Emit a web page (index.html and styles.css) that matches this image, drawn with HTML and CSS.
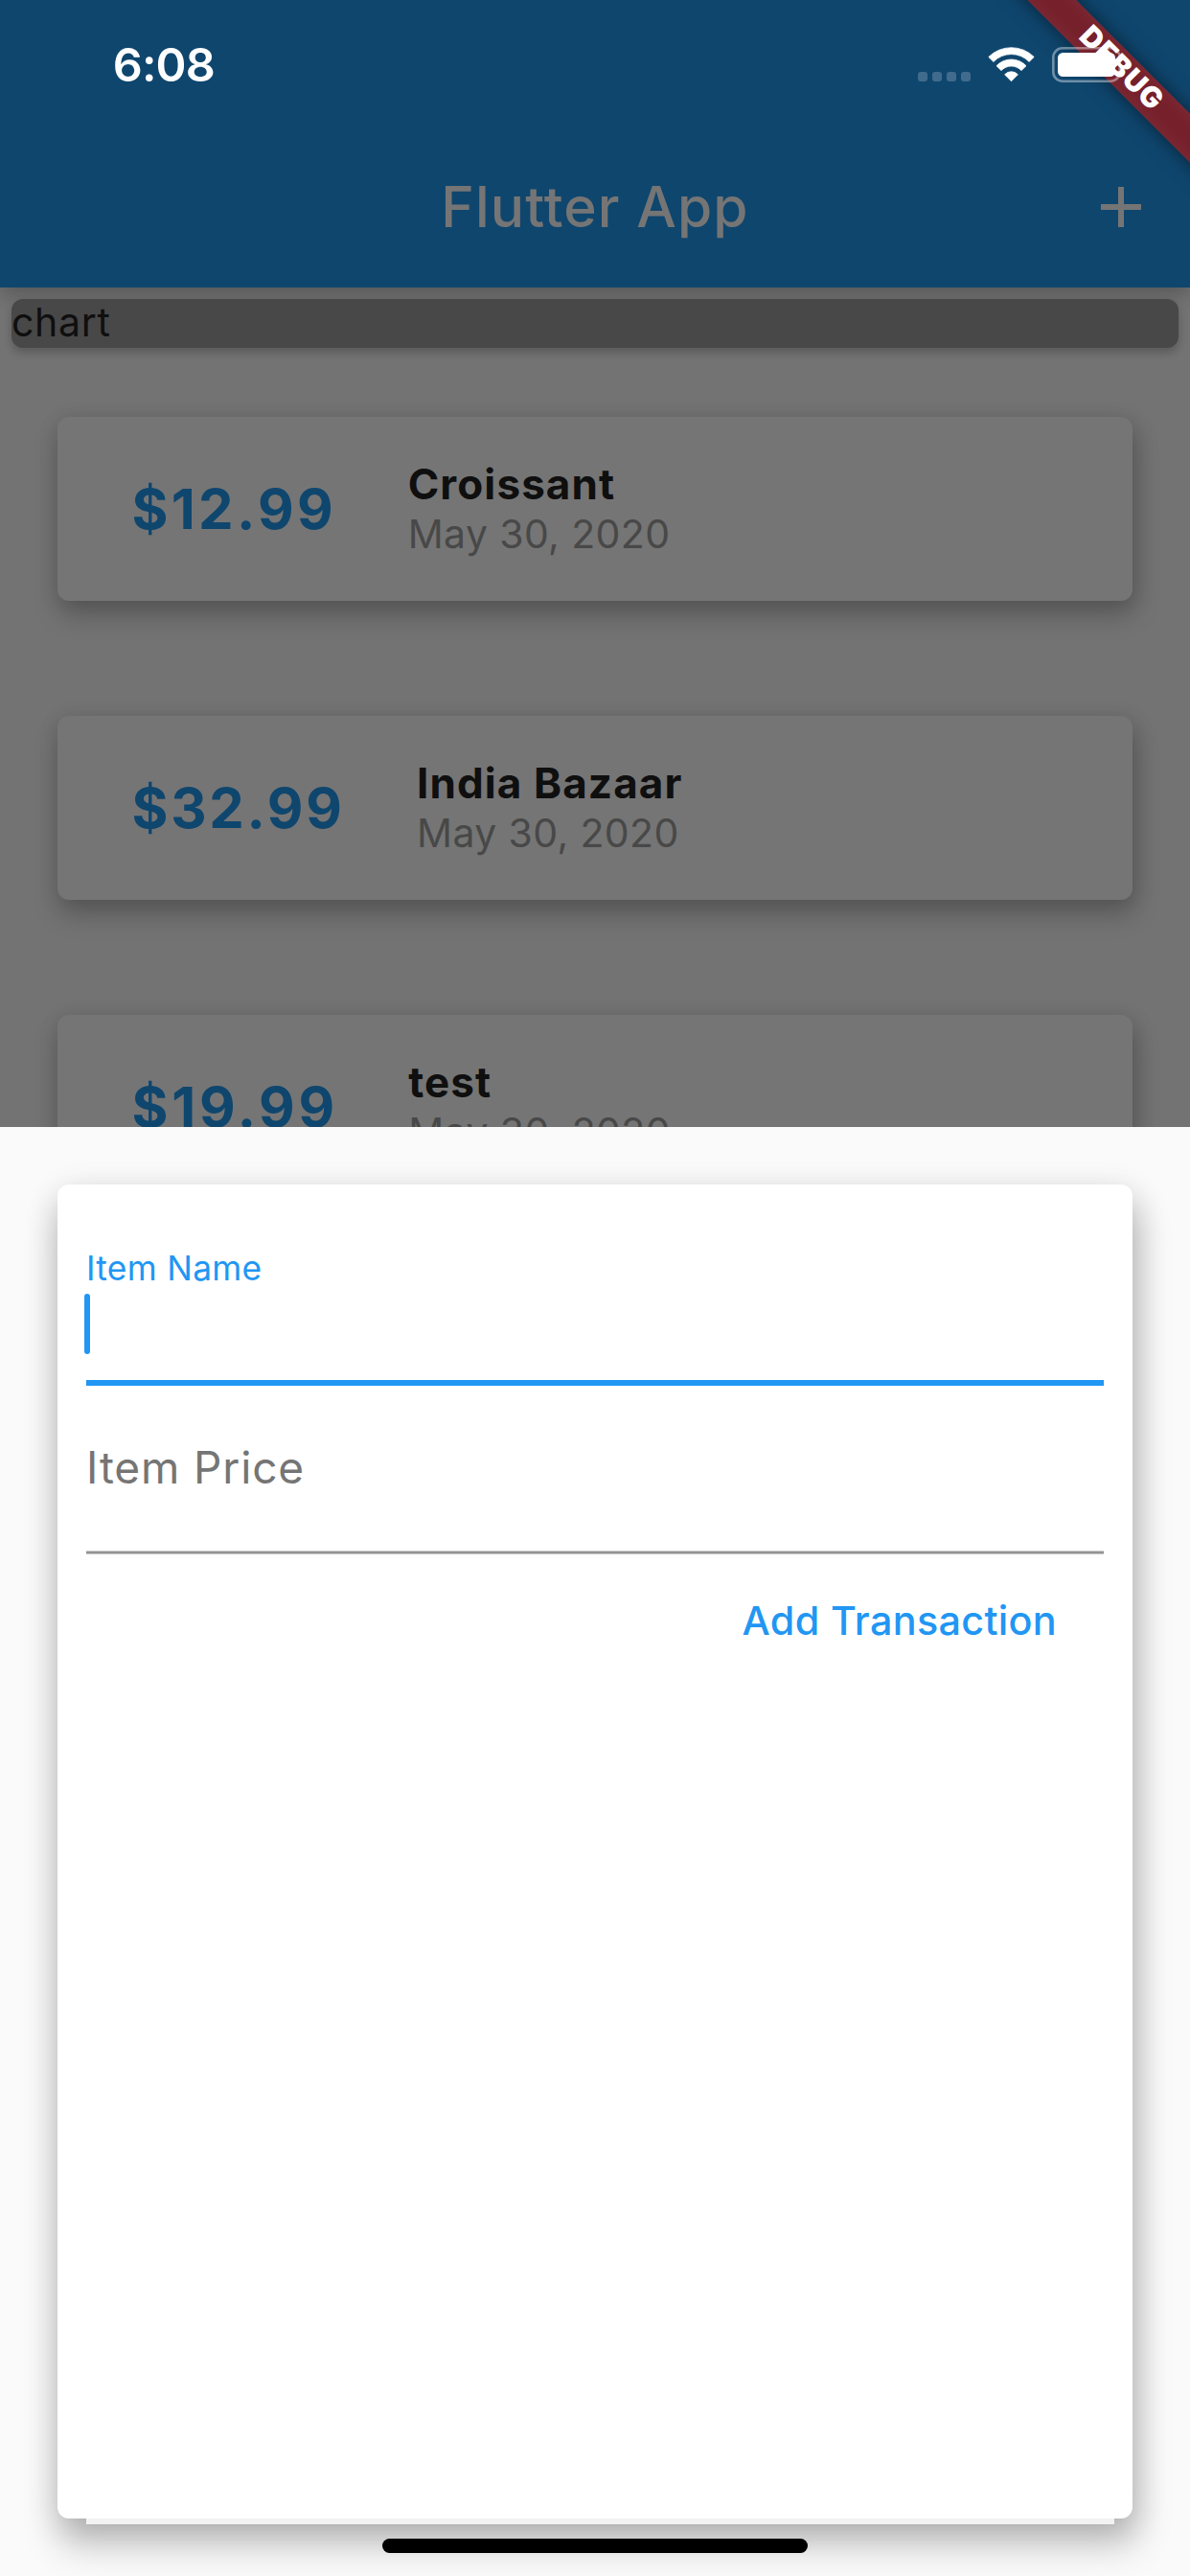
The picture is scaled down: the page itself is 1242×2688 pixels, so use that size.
FILE: index.html
```html
<!DOCTYPE html>
<html lang="en">
<head>
<meta charset="utf-8">
<title>Flutter App</title>
<link rel="stylesheet" href="styles.css">
</head>
<body>
<div class="screen">
  <header class="topbar">
    <div class="status">
      <span class="clock">6:08</span>
      <span class="signal"><i></i><i></i><i></i><i></i></span>
      <svg class="wifi" width="49" height="37" viewBox="0 0 49 37" fill="#fff" stroke="#fff" stroke-width=".8" stroke-linejoin="round">
        <path d="M.8 10.4A33.8 33.8 0 0 1 48.2 10.4L43.1 15.4A26 26 0 0 0 5.9 15.4Z"/>
        <path d="M9 19.7A21.3 21.3 0 0 1 40 19.7L35 24.6A14.3 14.3 0 0 0 14 24.6Z"/>
        <path d="M17.6 28.8A9.3 9.3 0 0 1 31.4 28.8L24.5 35.7Z"/>
      </svg>
      <svg class="battery" width="80" height="37" viewBox="0 0 80 37">
        <rect x="1.3" y="1.3" width="69.4" height="34.4" rx="9.5" fill="none" stroke="#fff" stroke-opacity=".4" stroke-width="2.6"/>
        <rect x="6" y="6" width="60" height="25" rx="5.5" fill="#fff"/>
      </svg>
    </div>
    <div class="appbar">
      <h1 class="title">Flutter App</h1>
      <svg class="add" width="42" height="42" viewBox="0 0 42 42" fill="#757575"><path d="M18 0h6v18h18v6H24v18h-6V24H0v-6h18z"/></svg>
    </div>
  </header>

  <main class="content">
    <div class="chart">chart</div>
    <div class="tx-list">
      <article class="tx">
        <div class="amount amount-a">$12.99</div>
        <div class="info"><div class="name">Croissant</div><div class="date">May 30, 2020</div></div>
      </article>
      <article class="tx">
        <div class="amount amount-b">$32.99</div>
        <div class="info"><div class="name">India Bazaar</div><div class="date">May 30, 2020</div></div>
      </article>
      <article class="tx">
        <div class="amount amount-c">$19.99</div>
        <div class="info"><div class="name">test</div><div class="date">May 30, 2020</div></div>
      </article>
    </div>
  </main>

  <section class="sheet">
    <form class="form-card">
      <div class="field-name">
        <div class="label-small">Item Name</div>
        <div class="cursor"></div>
      </div>
      <div class="field-price">Item Price</div>
      <div class="rule"></div>
      <div class="submit">Add Transaction</div>
    </form>
    <div class="sheet-edge"></div>
    <div class="home-indicator"></div>
  </section>

  <div class="debug">DEBUG</div>
</div>
</body>
</html>
```

FILE: styles.css
```css
* { box-sizing: border-box; }
body { margin: 0; font-family: Inter, "Liberation Sans", sans-serif; }

.screen {
  position: relative;
  width: 1242px;
  height: 2688px;
  overflow: hidden;
  background: #737373;
  display: flex;
  flex-direction: column;
}

/* top bar */
.topbar {
  position: relative;
  flex: none;
  height: 300px;
  background: #0f466e;
  box-shadow: 0 12px 15px -3px rgba(0,0,0,.13), 0 3px 24px rgba(0,0,0,.12);
}
.status {
  height: 135px;
  display: flex;
  align-items: center;
  padding: 0 64px 0 117.7px;
}
.clock {
  font-size: 48.5px;
  font-weight: 600;
  line-height: 60px;
  letter-spacing: -.8px;
  color: #fff;
}
.signal {
  display: flex;
  gap: 5px;
  margin-left: auto;
  padding-top: 25px;
}
.signal i { width: 10px; height: 10px; border-radius: 3px; background: #416b8c; }
.wifi { margin-left: 18px; }
.battery { margin-left: 18px; position: relative; z-index: 3; }
.appbar {
  height: 162px;
  display: grid;
  grid-template-columns: 51px 1fr 51px;
  align-items: center;
}
.title {
  grid-column: 2;
  margin: 0;
  text-align: center;
  font-size: 58.7px;
  font-weight: 550;
  line-height: 72px;
  letter-spacing: 1.1px;
  color: #757575;
}
.add { grid-column: 3; justify-self: end; margin-right: 51px; }

/* dimmed transaction list */
.content { flex: none; height: 876px; padding: 12px 12px 0; }
.chart {
  height: 51px;
  border-radius: 12px;
  background: #484848;
  color: #0f0f0f;
  font-size: 41px;
  line-height: 48px;
  letter-spacing: .7px;
  box-shadow: 0 5px 10px rgba(0,0,0,.22);
  position: relative;
}
.tx-list { display: flex; flex-direction: column; gap: 120px; padding: 72px 48px 0; }
.tx {
  height: 192px;
  border-radius: 12px;
  background: #757575;
  display: flex;
  align-items: center;
  padding-left: 77.5px;
  box-shadow: 2px 15px 28px rgba(0,0,0,.2), 2px 4px 22px rgba(0,0,0,.13);
}
.amount { color: #0f466e; font-size: 58px; font-weight: 700; line-height: 72px; }
.amount-a { width: 288.2px; letter-spacing: 3.32px; }
.amount-b { width: 297.5px; letter-spacing: 2.69px; }
.amount-c { width: 288.7px; letter-spacing: 3.73px; }
.name { color: #0f0f0f; font-size: 44px; font-weight: 700; line-height: 52px; letter-spacing: 1.1px; }
.date { color: #484848; font-size: 41px; line-height: 52px; letter-spacing: .37px; }

/* bottom sheet */
.sheet {
  flex: none;
  height: 1512px;
  padding: 60px 60px 0;
  background: #fafafa;
  position: relative;
}
.form-card {
  height: 1392px;
  padding: 30px;
  border-radius: 12px;
  background: #fff;
  box-shadow: 3px 26px 38px rgba(0,0,0,.24), 2px 8px 34px rgba(0,0,0,.14);
}
.field-name { height: 180px; padding-top: 34px; border-bottom: 6px solid #2196f3; }
.label-small { color: #2196f3; font-size: 35.3px; line-height: 48px; letter-spacing: .32px; }
.cursor { width: 6px; height: 63px; margin: 2px 0 0 -2px; border-radius: 3px; background: #2196f3; }
.field-price {
  height: 172px;
  padding-top: 55px;
  color: #757575;
  font-size: 46px;
  line-height: 60px;
  letter-spacing: .87px;
}
.rule { height: 4px; background: #949494; border: solid #c9c9c9; border-width: 1px 0; }
.submit {
  margin-top: 39px;
  padding-right: 49px;
  text-align: right;
  color: #2196f3;
  font-size: 41.3px;
  font-weight: 500;
  line-height: 60px;
  letter-spacing: .33px;
}
.sheet-edge { position: relative; width: 1073px; height: 6px; margin-left: 30px; background: #f2f2f2; }
.home-indicator { position: relative; width: 444px; height: 15px; margin: 15px auto 0; border-radius: 7.5px; background: #000; }

/* corner ribbon */
.debug {
  position: absolute;
  left: 1042px;
  top: 84px;
  width: 400px;
  height: 36px;
  transform-origin: 200px -84px;
  transform: rotate(45deg);
  background: linear-gradient(#7a2632, #75202a 35%, #75202a 65%, #7a2632);
  box-shadow: 0 0 20px rgba(0,0,0,.5);
  color: #fff;
  font-size: 30.3px;
  font-weight: 900;
  line-height: 33px;
  letter-spacing: .9px;
  text-align: center;
}
```
